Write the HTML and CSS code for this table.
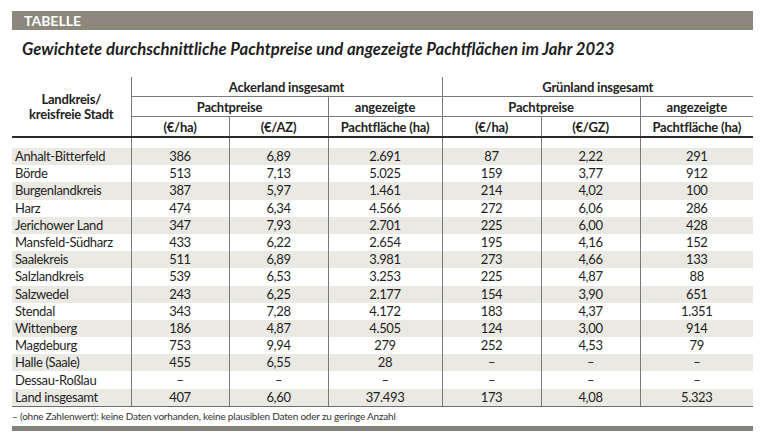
FILE: index.html
```html
<!DOCTYPE html>
<html lang="de">
<head>
<meta charset="utf-8">
<link rel="stylesheet" href="styles.css">
</head>
<body>
<div class="page">
  <div class="bar">TABELLE</div>
  <h1 class="title">Gewichtete durchschnittliche Pachtpreise und angezeigte Pachtflächen im Jahr 2023</h1>
  <table class="tbl">
    <colgroup>
      <col class="c1"><col class="c2"><col class="c3"><col class="c4"><col class="c5"><col class="c6"><col class="c7">
    </colgroup>
    <thead>
      <tr class="h">
        <th rowspan="3" class="lk">Landkreis/<br>kreisfreie Stadt</th>
        <th colspan="3" class="grp">Ackerland insgesamt</th>
        <th colspan="3" class="grp">Grünland insgesamt</th>
      </tr>
      <tr class="h">
        <th colspan="2">Pachtpreise</th>
        <th>angezeigte</th>
        <th colspan="2">Pachtpreise</th>
        <th>angezeigte</th>
      </tr>
      <tr class="h last">
        <th>(€/ha)</th>
        <th>(€/AZ)</th>
        <th>Pachtfläche (ha)</th>
        <th>(€/ha)</th>
        <th>(€/GZ)</th>
        <th>Pachtfläche (ha)</th>
      </tr>
    </thead>
    <tbody>
      <tr class="gap"><td></td><td></td><td></td><td></td><td></td><td></td><td></td></tr>
      <tr class="s"><td>Anhalt-Bitterfeld</td><td>386</td><td>6,89</td><td>2.691</td><td>87</td><td>2,22</td><td>291</td></tr>
      <tr><td>Börde</td><td>513</td><td>7,13</td><td>5.025</td><td>159</td><td>3,77</td><td>912</td></tr>
      <tr class="s"><td>Burgenlandkreis</td><td>387</td><td>5,97</td><td>1.461</td><td>214</td><td>4,02</td><td>100</td></tr>
      <tr><td>Harz</td><td>474</td><td>6,34</td><td>4.566</td><td>272</td><td>6,06</td><td>286</td></tr>
      <tr class="s"><td>Jerichower Land</td><td>347</td><td>7,93</td><td>2.701</td><td>225</td><td>6,00</td><td>428</td></tr>
      <tr><td>Mansfeld-Südharz</td><td>433</td><td>6,22</td><td>2.654</td><td>195</td><td>4,16</td><td>152</td></tr>
      <tr class="s"><td>Saalekreis</td><td>511</td><td>6,89</td><td>3.981</td><td>273</td><td>4,66</td><td>133</td></tr>
      <tr><td>Salzlandkreis</td><td>539</td><td>6,53</td><td>3.253</td><td>225</td><td>4,87</td><td>88</td></tr>
      <tr class="s"><td>Salzwedel</td><td>243</td><td>6,25</td><td>2.177</td><td>154</td><td>3,90</td><td>651</td></tr>
      <tr><td>Stendal</td><td>343</td><td>7,28</td><td>4.172</td><td>183</td><td>4,37</td><td>1.351</td></tr>
      <tr class="s"><td>Wittenberg</td><td>186</td><td>4,87</td><td>4.505</td><td>124</td><td>3,00</td><td>914</td></tr>
      <tr><td>Magdeburg</td><td>753</td><td>9,94</td><td>279</td><td>252</td><td>4,53</td><td>79</td></tr>
      <tr class="s"><td>Halle (Saale)</td><td>455</td><td>6,55</td><td>28</td><td>–</td><td>–</td><td>–</td></tr>
      <tr><td>Dessau-Roßlau</td><td>–</td><td>–</td><td>–</td><td>–</td><td>–</td><td>–</td></tr>
      <tr class="s end"><td>Land insgesamt</td><td>407</td><td>6,60</td><td>37.493</td><td>173</td><td>4,08</td><td>5.323</td></tr>
    </tbody>
  </table>
  <p class="note">– (ohne Zahlenwert): keine Daten vorhanden, keine plausiblen Daten oder zu geringe Anzahl</p>
  <div class="bottombar"></div>
</div>
</body>
</html>
```

FILE: styles.css
```css
html, body {
  margin: 0;
  padding: 0;
  background: #ffffff;
}
body {
  font-family: Lato, "Open Sans", sans-serif;
  color: #222;
}
.page {
  width: 741px;
  padding: 11px 0 0 12px;
}
.bar {
  height: 19px;
  background: #8c887e;
  color: #fff;
  font-weight: 700;
  font-size: 14px;
  line-height: 20px;
  padding-left: 12px;
}
.title {
  margin: 9px 0 0 10px;
  font-size: 16.7px;
  font-weight: 700;
  font-style: italic;
  line-height: 20px;
  color: #1e1e1e;
}
.tbl {
  margin-top: 18px;
  width: 741px;
  border-collapse: collapse;
  table-layout: fixed;
  font-size: 13px;
  letter-spacing: -0.35px;
}
.c1 { width: 119px; }
.c2 { width: 98px; }
.c3 { width: 99px; }
.c4 { width: 114px; }
.c5 { width: 99px; }
.c6 { width: 99px; }
.c7 { width: 113px; }
.tbl th {
  font-weight: 700;
  font-size: 13px;
  letter-spacing: -0.2px;
  height: 19px;
  padding: 0;
  line-height: 14px;
  text-align: center;
  border: 1px solid #7a7a7a;
  border-top: none;
  color: #222;
}
.tbl th.lk {
  line-height: 15px;
  border-left: none;
  border-bottom: 2px solid #2a2a2a;
}
.tbl th:last-child { border-right: none; }
.tbl tr.last th { border-bottom: 2px solid #2a2a2a; }
.tbl td {
  padding: 0;
  height: 17.2px;
  line-height: 15px;
  text-align: center;
  border-left: 1px solid #7a7a7a;
  border-right: 1px solid #7a7a7a;
  color: #1e1e1e;
}
.tbl td:first-child {
  text-align: left;
  padding-left: 3px;
  border-left: none;
}
.tbl td:last-child { border-right: none; }
.tbl tr.gap td { height: 10px; }
.tbl tr.s td { background: #ebe9e4; }
.tbl tr.end td { border-bottom: 1px solid #6e6e6e; }
.note {
  margin: 3px 0 0 0;
  font-size: 10px;
  letter-spacing: -0.2px;
  line-height: 13px;
  color: #333;
}
.bottombar {
  margin-top: 3px;
  height: 5px;
  background: #85817a;
}
```
